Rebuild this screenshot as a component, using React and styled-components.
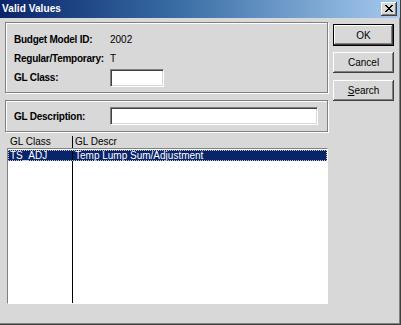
import React from "react";
import styled, { createGlobalStyle } from "styled-components";

const Global = createGlobalStyle`
  html, body { margin: 0; padding: 0; background: #d8d8d8; }
  * { box-sizing: border-box; }
`;

const face = "#d8d8d8";

const Window = styled.div`
  width: 401px;
  height: 325px;
  background: ${face};
  border-right: 1px solid #404040;
  border-bottom: 1px solid #404040;
  box-shadow: inset -1px -1px 0 #808080;
  font-family: "Liberation Sans", Arial, sans-serif;
  font-size: 10px;
  color: #000;
  display: flex;
  flex-direction: column;
`;

const TitleBar = styled.div`
  height: 18px;
  flex: none;
  display: flex;
  align-items: center;
  justify-content: space-between;
  padding: 0 3px 1px 2px;
  background: linear-gradient(to right, #0a246a 0%, #3a6ea5 45%, #a6caf0 100%);
`;

const Title = styled.span`
  color: #fff;
  font-weight: bold;
  font-size: 10px;
  letter-spacing: 0.1px;
`;

const CloseButton = styled.div`
  width: 16px;
  height: 14px;
  background: ${face};
  display: flex;
  align-items: center;
  justify-content: center;
  box-shadow: inset -1px -1px #404040, inset 1px 1px #fff, inset -2px -2px #808080;
`;

const Body = styled.div`
  flex: 1;
  display: flex;
  gap: 5px;
  padding: 4px 6px 0 5px;
`;

const Main = styled.div`
  width: 324px;
  display: flex;
  flex-direction: column;
`;

const Group = styled.div`
  height: ${p => p.h}px;
  border: 1px solid #808080;
  box-shadow: inset 1px 1px #fff, 1px 1px #fff;
  padding: ${p => p.pad};
  display: flex;
  flex-direction: column;
  margin-bottom: ${p => p.mb || 0}px;
`;

const FieldRow = styled.div`
  height: ${p => p.h || 19}px;
  display: flex;
  align-items: center;
`;

const Label = styled.span`
  width: 96px;
  font-weight: bold;
  font-size: 10px;
  letter-spacing: -0.25px;
  white-space: nowrap;
  flex: none;
`;

const Value = styled.span`
  font-size: 10px;
`;

const Input = styled.div`
  width: ${p => p.w}px;
  height: 18px;
  background: #fff;
  border: 1px solid;
  border-color: #808080 #fff #fff #808080;
  box-shadow: inset 1px 1px #404040, inset -1px -1px ${face};
`;

const ListHeader = styled.div`
  margin: 4px 0 0 2px;
  height: 12px;
  display: grid;
  grid-template-columns: 66px 1fr;
`;

const HeadCell = styled.div`
  padding-left: ${p => (p.first ? 3 : 2)}px;
  line-height: 11px;
  font-size: 10px;
  border-right: ${p => (p.first ? "1px solid #000" : "none")};
`;

const ListBody = styled.div`
  margin-left: 2px;
  height: 156px;
  background: #fff;
  border: 1px solid;
  border-color: #808080 #fff #fff #808080;
  display: flex;
  flex-direction: column;
  padding-top: 1px;
`;

const Row = styled.div`
  display: grid;
  grid-template-columns: 65px 1fr;
  height: ${p => (p.fill ? "auto" : "11px")};
  flex: ${p => (p.fill ? 1 : "none")};
  background: ${p => (p.selected ? "#0a246a" : "transparent")};
  color: ${p => (p.selected ? "#fff" : "#000")};
  outline: ${p => (p.selected ? "1px dotted #c8c8c8" : "none")};
  outline-offset: -1px;
`;

const Cell = styled.div`
  padding-left: 2px;
  font-size: 10px;
  line-height: 11px;
  white-space: nowrap;
  border-right: ${p => (p.first ? "1px solid #000" : "none")};
`;

const Side = styled.div`
  width: 61px;
  padding-top: 2px;
  display: flex;
  flex-direction: column;
  gap: 6px;
`;

const Button = styled.div`
  height: ${p => (p.isDefault ? 22 : 21)}px;
  margin-bottom: ${p => (p.isDefault ? 0 : 1)}px;
  display: flex;
  align-items: center;
  justify-content: center;
  font-size: 10px;
  background: ${face};
  border: ${p => (p.isDefault ? "1px solid #000" : "none")};
  box-shadow: inset -1px -1px #404040, inset 1px 1px #fff, inset -2px -2px #808080;
  u { text-decoration: underline; }
`;

export default function App() {
  return (
    <>
      <Global />
      <Window>
        <TitleBar>
          <Title>Valid Values</Title>
          <CloseButton>
            <svg width="8" height="7" viewBox="0 0 8 7">
              <path d="M0 0h2v1h1v1h2v-1h1v-1h2v1h-1v1h-1v1h-1v1h1v1h1v1h1v1h-2v-1h-1v-1h-2v1h-1v1h-2v-1h1v-1h1v-1h1v-1h-1v-1h-1v-1h-1z" fill="#000" />
            </svg>
          </CloseButton>
        </TitleBar>
        <Body>
          <Main>
            <Group h={71} pad="7px 0 0 8px" mb={7}>
              <FieldRow>
                <Label>Budget Model ID:</Label>
                <Value>2002</Value>
              </FieldRow>
              <FieldRow>
                <Label>Regular/Temporary:</Label>
                <Value>T</Value>
              </FieldRow>
              <FieldRow>
                <Label>GL Class:</Label>
                <Input w={54} />
              </FieldRow>
            </Group>
            <Group h={32} pad="0 0 0 8px">
              <FieldRow h={30}>
                <Label>GL Description:</Label>
                <Input w={208} />
              </FieldRow>
            </Group>
            <ListHeader>
              <HeadCell first>GL Class</HeadCell>
              <HeadCell>GL Descr</HeadCell>
            </ListHeader>
            <ListBody>
              <Row selected>
                <Cell first>TS_ADJ</Cell>
                <Cell>Temp Lump Sum/Adjustment</Cell>
              </Row>
              <Row fill>
                <Cell first />
                <Cell />
              </Row>
            </ListBody>
          </Main>
          <Side>
            <Button isDefault>OK</Button>
            <Button>Cancel</Button>
            <Button>
              <span><u>S</u>earch</span>
            </Button>
          </Side>
        </Body>
      </Window>
    </>
  );
}
